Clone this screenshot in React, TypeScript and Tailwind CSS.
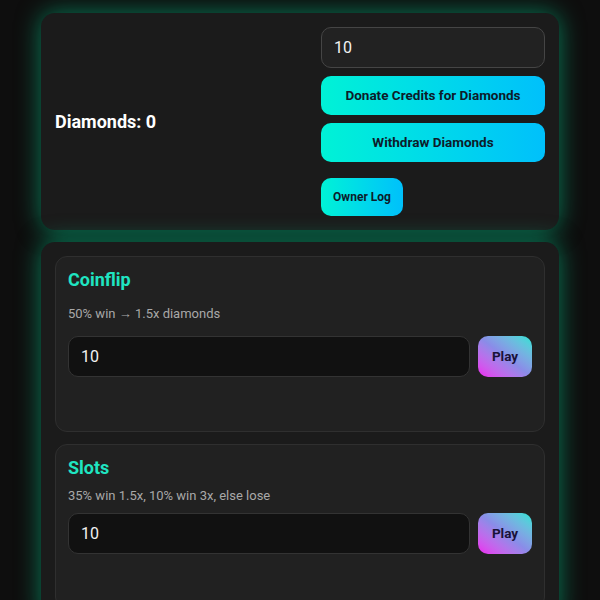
import { useState } from "react";

type Game = {
  title: string;
  desc: string;
  titleGap: string;
  descGap: string;
};

const games: Game[] = [
  { title: "Coinflip", desc: "50% win → 1.5x diamonds", titleGap: "mt-[15px]", descGap: "mt-[13px]" },
  { title: "Slots", desc: "35% win 1.5x, 10% win 3x, else lose", titleGap: "mt-[9px]", descGap: "mt-[8px]" },
];

function GameCard({ game }: { game: Game }) {
  const [bet, setBet] = useState("10");
  return (
    <div className="rounded-xl border border-[#2f2f2f] bg-[#212121] px-[12px] pt-[13px] pb-[13px]">
      <h3 className="text-[18px] font-bold leading-[20px] text-[#1fe5c2]">{game.title}</h3>
      <p className={`${game.titleGap} text-[13px] leading-[18px] text-[#a8a8a8]`}>{game.desc}</p>
      <div className={`${game.descGap} flex gap-2`}>
        <input
          value={bet}
          onChange={(e) => setBet(e.target.value)}
          className="h-[41px] min-w-0 flex-1 rounded-[10px] border border-[#333] bg-[#111] px-3 text-[16px] text-[#f2f2f2] outline-none"
        />
        <button className="h-[41px] w-[54px] shrink-0 rounded-[10px] bg-gradient-to-tr from-[#ec14f0] via-[#8a8ce8] to-[#14e4d4] text-[13.5px] font-bold text-[#1a1238]">
          Play
        </button>
      </div>
      <div className="h-[41px]" />
    </div>
  );
}

export default function App() {
  const [amount, setAmount] = useState("10");
  const btn =
    "rounded-[10px] bg-gradient-to-r from-[#00f2d6] to-[#00c0fb] font-bold text-[#0d1b2a]";

  return (
    <div
      className="min-h-[600px] bg-[#0e0e0e] px-[41px] pt-[13px] pb-6"
      style={{ fontFamily: "Roboto, 'Liberation Sans', sans-serif" }}
    >
      <div className="flex flex-col gap-3">
        {/* wallet */}
        <div className="flex items-center justify-between rounded-[14px] bg-[#1b1b1b] p-[14px] shadow-[0_0_24px_rgba(0,230,160,0.5)]">
          <div className="text-[18px] font-bold text-white">Diamonds: 0</div>
          <div className="flex w-[224px] flex-col">
            <input
              value={amount}
              onChange={(e) => setAmount(e.target.value)}
              className="h-[41px] rounded-[10px] border border-[#454545] bg-[#222] px-3 text-[16px] text-[#f2f2f2] outline-none"
            />
            <button className={`${btn} mt-2 h-[39px] text-[13.5px]`}>Donate Credits for Diamonds</button>
            <button className={`${btn} mt-2 h-[39px] text-[13.5px]`}>Withdraw Diamonds</button>
            <button className={`${btn} mt-4 h-[38px] w-[82px] text-[12px]`}>Owner Log</button>
          </div>
        </div>

        {/* games */}
        <div className="flex flex-col gap-3 rounded-[14px] bg-[#1b1b1b] p-[14px] shadow-[0_0_24px_rgba(0,230,160,0.5)]">
          {games.map((g) => (
            <GameCard key={g.title} game={g} />
          ))}
        </div>
      </div>
    </div>
  );
}
